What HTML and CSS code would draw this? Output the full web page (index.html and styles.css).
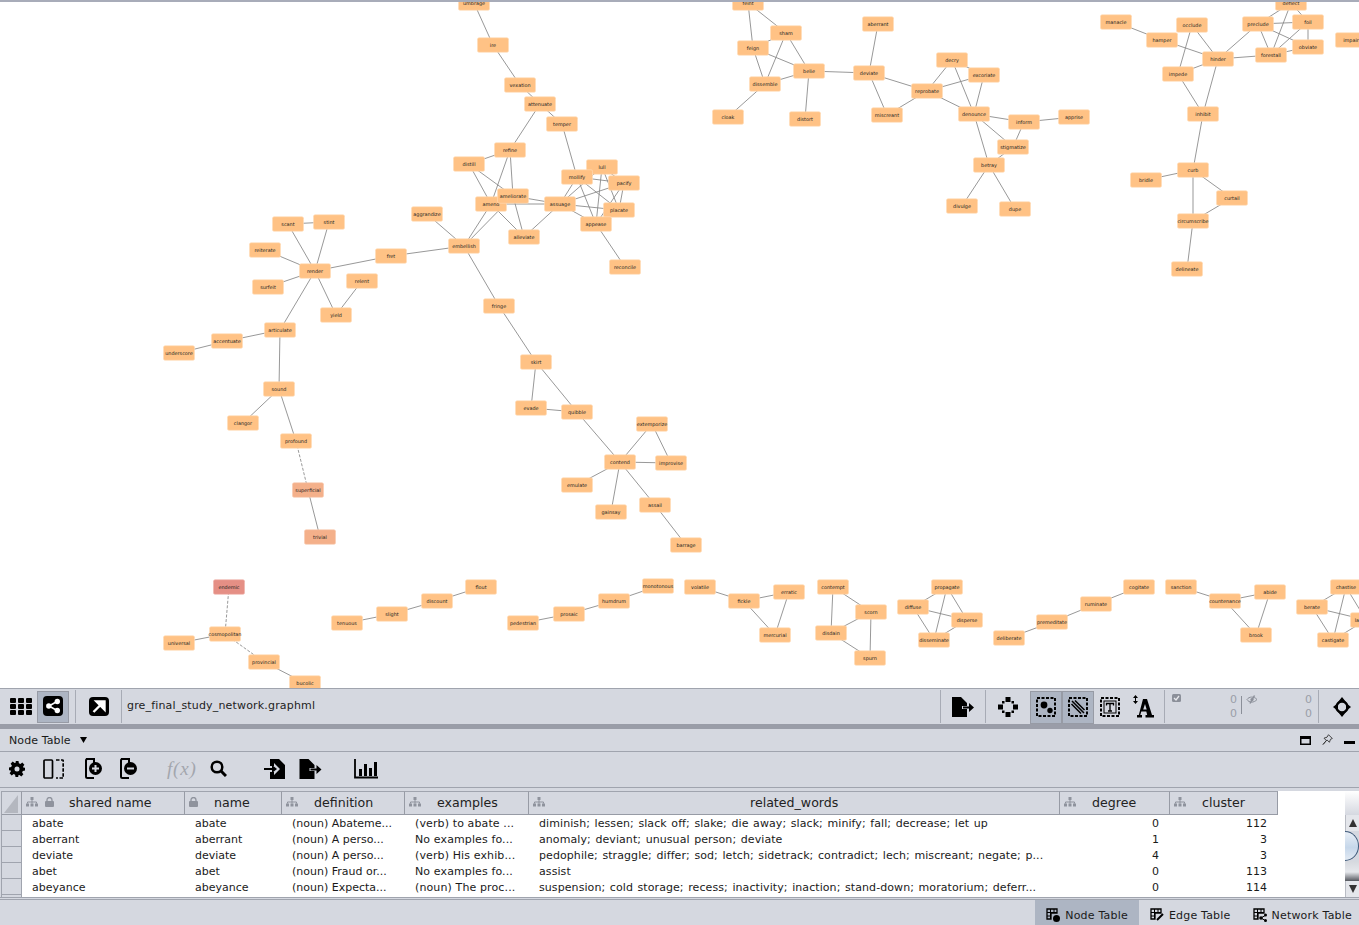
FILE: index.html
```html
<!DOCTYPE html>
<html lang="en">
<head>
<meta charset="utf-8">
<title>gre_final_study_network.graphml</title>
<link rel="stylesheet" href="styles.css">
</head>
<body>
<main class="canvas"><svg id="graph" class="graph" viewBox="0 2 1359 686" width="1359" height="686"></svg></main>

<section class="net-bar">
  <div class="group">
    <span class="tool t-grid"><svg width="22" height="17" viewBox="0 0 22 17"><g fill="#000"><rect width="6" height="5" rx="1"/><rect x="8" width="6" height="5" rx="1"/><rect x="16" width="6" height="5" rx="1"/><rect y="6" width="6" height="5" rx="1"/><rect x="8" y="6" width="6" height="5" rx="1"/><rect x="16" y="6" width="6" height="5" rx="1"/><rect y="12" width="6" height="5" rx="1"/><rect x="8" y="12" width="6" height="5" rx="1"/><rect x="16" y="12" width="6" height="5" rx="1"/></g></svg></span>
    <span class="tool t-share on"><svg width="20" height="20" viewBox="0 0 20 20"><rect width="20" height="20" rx="4" fill="#000"/><path d="M14 5.500 6 10l8 4.500" stroke="#fff" stroke-width="1.600" fill="none"/><circle cx="14.300" cy="5.500" r="2.700" fill="#fff"/><circle cx="5.800" cy="10" r="2.700" fill="#fff"/><circle cx="14.300" cy="14.500" r="2.700" fill="#fff"/></svg></span>
    <span class="sep s1"></span>
    <span class="tool t-open"><svg width="20" height="19" viewBox="0 0 20 19"><rect width="20" height="19" rx="4" fill="#000"/><path d="M4.500 15 13 6.500M7.500 4.500H15.500V12.500Z" stroke="#fff" stroke-width="2.400" fill="#fff"/></svg></span>
    <span class="sep s2"></span>
    <span class="file-name">gre_final_study_network.graphml</span>
  </div>
  <div class="group group-right">
    <span class="sep"></span>
    <span class="tool t-export"><svg width="22" height="20" viewBox="0 0 22 20"><path d="M0 0h9l6 6v3H10v3h5v8H0z" fill="#000"/><path d="M11 9.500h6V6l5 4.500-5 4.500v-3.500h-6z" fill="#000"/></svg></span>
    <span class="sep s3"></span>
    <span class="tool t-nb"><svg width="20" height="20" viewBox="0 0 20 20" fill="#000"><rect x="7.500" y="0" width="5" height="5"/><rect x="0" y="7.500" width="5" height="5"/><rect x="15" y="7.500" width="5" height="5"/><rect x="7.500" y="15" width="5" height="5"/><rect x="4" y="4" width="2.500" height="2.500"/><rect x="13.500" y="4" width="2.500" height="2.500"/><rect x="4" y="13.500" width="2.500" height="2.500"/><rect x="13.500" y="13.500" width="2.500" height="2.500"/></svg></span>
    <span class="toggle on first"><svg width="20" height="20" viewBox="0 0 20 20"><rect x="1" y="1" width="18" height="18" fill="none" stroke="#000" stroke-width="2" stroke-dasharray="3 1.500"/><circle cx="8" cy="8" r="3.400"/><circle cx="14" cy="13.500" r="2.700"/></svg></span>
    <span class="toggle on"><svg width="20" height="20" viewBox="0 0 20 20"><rect x="1" y="1" width="18" height="18" fill="none" stroke="#000" stroke-width="2" stroke-dasharray="3 1.500"/><path d="M4 4l12 12M7 3.500l9.500 9.500M3.500 7l9.500 9.500" stroke="#000" stroke-width="1.500"/></svg></span>
    <span class="toggle"><svg width="20" height="20" viewBox="0 0 20 20"><rect x="1" y="1" width="18" height="18" fill="none" stroke="#000" stroke-width="2" stroke-dasharray="3 1.500"/><rect x="4" y="4" width="12" height="12" fill="none" stroke="#000"/><path d="M6.500 8.500v-2h7v2M10 6.500v7.500M8 14h4" fill="none" stroke="#000" stroke-width="1.300"/></svg></span>
    <span class="t-label"><svg width="22" height="23" viewBox="0 0 22 23"><path d="M3.500 0 1 3h5zM3.500 9 1 6h5zM3 3h1v3H3z"/><path fill-rule="evenodd" d="M11 4h4l5 16h2v2.500h-8.500V20h1.700l-.9-3.500h-5l-1 3.500h1.700v2.500H5V20h1.800zM13 9l-1.800 5.500h3.500z"/></svg></span>
    <span class="sep s4"></span>
    <div class="counts">
      <svg class="ic-check" width="9" height="8" viewBox="0 0 9 8"><rect width="9" height="8" rx="1.500" fill="#8b8f99"/><path d="M2 4l2 2 3-4" stroke="#e8e9ed" stroke-width="1.300" fill="none"/></svg>
      <span class="nums n1"><span>0</span><span>0</span></span>
      <span class="minisep"></span>
      <svg class="ic-hide" width="12" height="9" viewBox="0 0 12 9"><path d="M1 4.500C3 1.500 8 1 11 4.500 8 8 3 8 1 4.500z" fill="none" stroke="#8b8f99"/><path d="M4 8.500 8.500 0.500" stroke="#8b8f99" stroke-width="1.500"/><circle cx="6" cy="4.500" r="1.600" fill="#8b8f99"/></svg>
      <span class="nums n2"><span>0</span><span>0</span></span>
    </div>
    <span class="sep s5"></span>
    <span class="t-fit"><svg width="18" height="20" viewBox="0 0 18 20"><path d="M9 0l4 5H5zM9 20l-4-5h8zM0 10l5-4v8zM18 10l-5 4V6z"/><circle cx="9" cy="10" r="5.500" fill="none" stroke="#000" stroke-width="2.400"/></svg></span>
  </div>
</section>

<div class="splitter"></div>

<header class="panel-head">
  <span class="panel-title">Node Table</span>
  <svg class="caret" width="7" height="6" viewBox="0 0 7 6"><path d="M0 0h7L3.500 6z"/></svg>
  <span class="panel-actions">
    <svg width="11" height="9" viewBox="0 0 11 9"><rect x=".75" y=".75" width="9.500" height="7.500" fill="none" stroke="#000" stroke-width="1.500"/><rect width="11" height="3"/></svg>
    <svg width="11" height="12" viewBox="0 0 11 12"><path d="M6.500.7l3.800 3.800-1.800.8-1.100 3-2.400-2.400L1 10.500l3.300-4L2 4.200l3-1z" fill="none" stroke="#333" stroke-width=".9"/></svg>
    <svg class="min" width="11" height="3" viewBox="0 0 11 3"><rect width="11" height="3"/></svg>
  </span>
</header>

<section class="table-tools">
  <svg class="i-gear" width="16" height="16" viewBox="0 0 16 16"><path fill-rule="evenodd" d="M6.500 0h3l.4 2.200 1.500.7L13.300 1.600l2.100 2.100-1.300 1.900.7 1.500L16 6.500v3l-2.200.4-.7 1.500 1.300 1.900-2.100 2.100-1.900-1.300-1.500.7L9.500 16h-3l-.4-2.200-1.500-.7-1.900 1.300L.6 12.300l1.300-1.900-.7-1.500L0 9.500v-3l2.200-.4.7-1.500L1.600 2.700 3.700.6l1.900 1.300 1.500-.7zM8 5.500a2.500 2.500 0 1 0 0 5 2.500 2.500 0 0 0 0-5z"/></svg>
  <svg class="i-cols" width="21" height="20" viewBox="0 0 21 20"><rect x="1" y="1" width="8.500" height="18" rx="1" fill="none" stroke="#000" stroke-width="1.700"/><path d="M13 1h6.500a.7.7 0 0 1 .7.700V19h-7.200" fill="none" stroke="#000" stroke-width="1.700" stroke-dasharray="3.500 1.500"/></svg>
  <svg class="i-add" width="17" height="21" viewBox="0 0 17 21"><path d="M9 1H2.500A1.500 1.500 0 0 0 1 2.500v16A1.500 1.500 0 0 0 2.500 20H9" fill="none" stroke="#000" stroke-width="2"/><path d="M1 1h8v4" fill="none" stroke="#000" stroke-width="2"/><circle cx="10.500" cy="10.500" r="6.500"/><path d="M10.500 7v7M7 10.500h7" stroke="#d5d8e0" stroke-width="2"/></svg>
  <svg class="i-del" width="17" height="21" viewBox="0 0 17 21"><path d="M9 1H2.500A1.500 1.500 0 0 0 1 2.500v16A1.500 1.500 0 0 0 2.500 20H9" fill="none" stroke="#000" stroke-width="2"/><path d="M1 1h8v4" fill="none" stroke="#000" stroke-width="2"/><circle cx="10.500" cy="10.500" r="6.500"/><path d="M7 10.500h7" stroke="#d5d8e0" stroke-width="2"/></svg>
  <span class="fx">f(x)</span>
  <svg class="i-search" width="17" height="17" viewBox="0 0 17 17"><circle cx="7" cy="7" r="5.300" fill="none" stroke="#000" stroke-width="2.500"/><path d="M11 11l5 5" stroke="#000" stroke-width="3"/></svg>
  <svg class="i-import" width="21" height="20" viewBox="0 0 21 20"><path d="M6 0h9l6 6v14H6v-7h4v3l6-6-6-6v3H6z"/><path d="M0 9h8V6l5 4-5 4v-3H0z"/></svg>
  <svg class="i-export" width="23" height="20" viewBox="0 0 22 20"><path d="M0 0h9l6 6v3H10v3h5v8H0z"/><path d="M11 9.500h6V6l5 4.500-5 4.500v-3.500h-6z"/></svg>
  <svg class="i-chart" width="24" height="20" viewBox="0 0 24 20"><path d="M1 0v18.500h23" fill="none" stroke="#000" stroke-width="1.800"/><rect x="5" y="10" width="3" height="7"/><rect x="10" y="5" width="3" height="12"/><rect x="15" y="9" width="3" height="8"/><rect x="20" y="3" width="3" height="14"/></svg>
</section>

<section class="table-wrap">
  <div class="table">
    <div class="row head">
      <div class="th corner"><svg width="14" height="18" viewBox="0 0 14 18"><path d="M14 0v18H0z" fill="#b4b7bf"/></svg></div>
      <div class="th c-shared"><svg class="ic-tree" width="12" height="10" viewBox="0 0 12 10"><use href="#tree"/></svg><svg class="ic-lock" width="9" height="10" viewBox="0 0 9 10"><use href="#lock"/></svg><span>shared name</span></div>
      <div class="th c-name"><svg class="ic-lock solo" width="9" height="10" viewBox="0 0 9 10"><use href="#lock"/></svg><span>name</span></div>
      <div class="th c-def"><svg class="ic-tree" width="12" height="10" viewBox="0 0 12 10"><use href="#tree"/></svg><span>definition</span></div>
      <div class="th c-ex"><svg class="ic-tree" width="12" height="10" viewBox="0 0 12 10"><use href="#tree"/></svg><span>examples</span></div>
      <div class="th c-rel"><svg class="ic-tree" width="12" height="10" viewBox="0 0 12 10"><use href="#tree"/></svg><span>related_words</span></div>
      <div class="th c-deg"><svg class="ic-tree" width="12" height="10" viewBox="0 0 12 10"><use href="#tree"/></svg><span>degree</span></div>
      <div class="th c-clu"><svg class="ic-tree" width="12" height="10" viewBox="0 0 12 10"><use href="#tree"/></svg><span>cluster</span></div>
    </div>
    <div class="rows">
      <div class="row"><div class="rh"></div><div class="td">abate</div><div class="td">abate</div><div class="td">(noun) Abateme...</div><div class="td ex">(verb) to abate ...</div><div class="td words">diminish; lessen; slack off; slake; die away; slack; minify; fall; decrease; let up</div><div class="td num">0</div><div class="td num">112</div></div>
      <div class="row"><div class="rh"></div><div class="td">aberrant</div><div class="td">aberrant</div><div class="td">(noun) A perso...</div><div class="td ex">No examples fo...</div><div class="td words">anomaly; deviant; unusual person; deviate</div><div class="td num">1</div><div class="td num">3</div></div>
      <div class="row"><div class="rh"></div><div class="td">deviate</div><div class="td">deviate</div><div class="td">(noun) A perso...</div><div class="td ex">(verb) His exhib...</div><div class="td words">pedophile; straggle; differ; sod; letch; sidetrack; contradict; lech; miscreant; negate; p...</div><div class="td num">4</div><div class="td num">3</div></div>
      <div class="row"><div class="rh"></div><div class="td">abet</div><div class="td">abet</div><div class="td">(noun) Fraud or...</div><div class="td ex">No examples fo...</div><div class="td words">assist</div><div class="td num">0</div><div class="td num">113</div></div>
      <div class="row"><div class="rh"></div><div class="td">abeyance</div><div class="td">abeyance</div><div class="td">(noun) Expecta...</div><div class="td ex">(noun) The proc...</div><div class="td words">suspension; cold storage; recess; inactivity; inaction; stand-down; moratorium; deferr...</div><div class="td num">0</div><div class="td num">114</div></div>
      <div class="rh tail"></div>
    </div>
  </div>
  <div class="scrollbar">
    <div class="sb-corner"></div>
    <div class="sb-btn"><svg width="8" height="8" viewBox="0 0 8 8"><path d="M4 0l4 8H0z" fill="#333"/></svg></div>
    <div class="sb-thumb"></div>
    <div class="sb-track"></div>
    <div class="sb-btn"><svg width="8" height="8" viewBox="0 0 8 8"><path d="M4 8L0 0h8z" fill="#333"/></svg></div>
  </div>
</section>

<footer class="status">
  <div class="tab on"><svg width="14" height="14" viewBox="0 0 14 14"><use href="#tbl"/><circle cx="10.500" cy="10.500" r="3.500"/></svg><span>Node Table</span></div>
  <div class="tab"><svg width="14" height="14" viewBox="0 0 14 14"><use href="#tbl"/><path d="M7 12l6-6" stroke="#000" stroke-width="2"/></svg><span>Edge Table</span></div>
  <div class="tab last"><svg width="14" height="14" viewBox="0 0 14 14"><use href="#tbl"/><path d="M8 10l5-3M8 10l5 3" stroke="#000"/><circle cx="8" cy="10" r="1.800"/><circle cx="12.500" cy="7" r="1.500"/><circle cx="12.500" cy="12.500" r="1.500"/></svg><span>Network Table</span></div>
</footer>

<svg class="defs" width="0" height="0" aria-hidden="true">
  <defs>
    <g id="tree" fill="#8f939d"><rect x="4.500" y="0" width="3" height="3"/><rect x="0" y="6.500" width="3" height="3"/><rect x="4.500" y="6.500" width="3" height="3"/><rect x="9" y="6.500" width="3" height="3"/><path d="M6 3v3.500M1.500 6.500V5h9v1.500" fill="none" stroke="#8f939d"/></g>
    <g id="lock"><rect x="0" y="4" width="9" height="6" rx="1" fill="#8f939d"/><path d="M2 4.500V3a2.500 2.500 0 0 1 5 0v1.500" fill="none" stroke="#8f939d" stroke-width="1.300"/></g>
    <g id="tbl"><path d="M1 1h10v4H5v6H1z" fill="none" stroke="#000" stroke-width="1.300"/><path d="M1 4.500h10M1 8h4M4.500 1v10M8 1v4" stroke="#000" stroke-width="1"/></g>
  </defs>
</svg>
<script src="app.js"></script>
</body>
</html>
```
FILE: styles.css
```css
* { box-sizing: border-box; }
html, body { margin: 0; padding: 0; }
body {
  width: 1359px;
  height: 925px;
  overflow: hidden;
  display: flex;
  flex-direction: column;
  background: #d5d8e0;
  color: #1a1a1a;
  font: 11px "DejaVu Sans", sans-serif;
}
.canvas { height: 688px; flex: none; background: #fff; border-top: 2px solid #a8acb9; overflow: hidden; }
.graph { display: block; }
.edge { stroke: #858585; stroke-width: .85; fill: none; }
.edge.dash { stroke-dasharray: 3 1.600; }
.node rect { fill: #ffc285; stroke: #ffdcb8; stroke-width: .6; }
.node.warm rect { fill: #f4b08a; stroke: #f8c9ae; }
.node.hot rect { fill: #e58f85; stroke: #efb3ab; }
.node text {
  font: 4.900px "DejaVu Sans", sans-serif;
  fill: #222;
  text-anchor: middle;
  text-rendering: geometricPrecision;
}

.net-bar {
  height: 36px; flex: none;
  display: flex; justify-content: space-between;
  border-top: 1px solid #a0a4ae;
}
.group { display: flex; align-items: center; height: 35px; }
.tool { display: flex; align-items: center; justify-content: center; }
.t-grid { margin-left: 10px; }
.t-share { align-self: flex-start; margin: 2px 0 0 5px; width: 32px; height: 32px; padding-bottom: 2px; background: #adb5c3; border: 1px solid #979ba5; }
.sep { width: 1px; height: 33px; background: #a7abb5; flex: none; }
.sep.s1 { margin-left: 6px; }
.t-open { margin-left: 13px; }
.sep.s2 { margin-left: 12px; }
.file-name { margin: 0 0 2px 5px; font-size: 11px; letter-spacing: .17px; color: #222; }
.t-export { margin-left: 11px; }
.sep.s3 { margin-left: 11px; }
.t-nb { margin-left: 12px; }
.toggle { width: 32px; height: 33px; margin-top: 1px; display: flex; align-items: center; justify-content: center; }
.toggle.first { margin-left: 12px; }
.toggle.on { background: #adb5c3; border: 1px solid #979ba5; }
.t-label { margin-left: 6px; display: flex; }
.sep.s4 { margin-left: 10px; }
.counts { width: 153px; height: 33px; flex: none; display: flex; color: #9a9ea8; font-size: 11px; }
.ic-check { margin: 4px 0 0 7px; }
.nums { display: flex; flex-direction: column; text-align: right; line-height: 14px; padding-top: 3px; }
.nums.n1 { margin-left: 49px; width: 6px; }
.minisep { width: 1px; height: 18px; margin: 6px 0 0 5px; background: #8b8f99; }
.ic-hide { margin: 5px 0 0 4px; }
.nums.n2 { margin-left: 47px; width: 6px; }
.t-fit { margin: 0 8px 0 14px; display: flex; }

.splitter { height: 5px; flex: none; background: #9a9da8; }

.panel-head {
  height: 23px; flex: none;
  display: flex; align-items: center;
  padding-left: 9px;
  border-bottom: 1px solid #a0a4ae;
}
.panel-title { font-size: 11px; letter-spacing: .1px; }
.caret { margin-left: 9px; }
.panel-actions { margin-left: auto; display: flex; align-items: center; gap: 11px; padding-right: 4px; }
.panel-actions .min { margin-top: 5px; }

.table-tools {
  height: 36px; flex: none;
  display: flex; align-items: center;
  padding-bottom: 2px;
  border-bottom: 1px solid #a0a4ae;
}
.i-gear { margin-left: 9px; }
.i-cols { margin-left: 18px; }
.i-add { margin-left: 21px; }
.i-del { margin-left: 18px; }
.fx { margin-left: 30px; width: 29px; font: italic 19px "Liberation Serif", serif; color: #a3a6ad; white-space: nowrap; letter-spacing: .8px; }
.i-search { margin-left: 14px; }
.i-import { margin-left: 37px; }
.i-export { margin-left: 14px; }
.i-chart { margin-left: 32px; }

.table-wrap {
  height: 107px; flex: none;
  margin-top: 3px;
  display: flex;
  border-bottom: 1px solid #a0a4ae;
  padding-left: 1px;
}
.table { width: 1344px; background: #fff; display: flex; flex-direction: column; border-left: 1px solid #a0a4ae; }
.row { display: grid; grid-template-columns: 20px 163px 97px 123px 124px 531px 110px 108px; }
.row.head { height: 24px; background: #fff; }
.th {
  display: flex; align-items: center;
  padding-bottom: 2px;
  background: #d5d8e0;
  border-top: 1px solid #a0a4ae;
  border-right: 1px solid #979ba5;
  border-bottom: 1px solid #979ba5;
  font-size: 12.600px; color: #222;
}
.th svg { flex: none; }
.th.corner { padding: 2px 0 0 2px; }
.ic-tree { margin-left: 4px; }
.ic-lock { margin-left: 7px; }
.ic-lock.solo { margin-left: 4px; }
.c-shared span { margin-left: 15px; }
.c-name span { margin-left: 16px; }
.c-def span { margin-left: 16px; }
.c-ex span { margin-left: 16px; }
.c-rel span { margin-left: 205px; }
.c-deg span { margin-left: 16px; }
.c-clu span { margin-left: 16px; }
.rows { flex: 1; }
.rh { background: #d5d8e0; border-right: 1px solid #a0a4ae; border-bottom: 1px solid #a0a4ae; height: 16px; }
.rh.tail { width: 20px; height: 2px; border-bottom: 0; }
.td { height: 16px; line-height: 16px; padding: 1px 10px 0; white-space: nowrap; overflow: hidden; }
.td.ex { letter-spacing: .12px; }
.td.words { letter-spacing: .08px; word-spacing: 1px; }
.td.num { text-align: right; padding-right: 11px; }

.scrollbar { width: 14px; flex: none; display: flex; flex-direction: column; }
.sb-corner { height: 24px; flex: none; background: linear-gradient(#fff, #d5d8e0); }
.sb-btn { height: 16px; flex: none; display: flex; align-items: center; justify-content: center; background: #e4e6eb; border-left: 1px solid #b9bcc4; }
.sb-thumb { height: 30px; flex: none; background: linear-gradient(#e8eef6, #c6d7ea 55%, #e2eaf3); border: 1px solid #3f5a7a; border-left: 0; border-radius: 0 14px 14px 0 / 0 15px 15px 0; }
.sb-track { flex: 1; background: linear-gradient(#d5d8de, #e6e8ec 55%, #55585f); }

.status { flex: 1; margin-top: 1px; border-top: 1px solid #a0a4ae; display: flex; justify-content: flex-end; }
.tab { display: flex; align-items: center; gap: 5px; padding: 5px 11px 0; letter-spacing: .2px; }
.tab.on { background: #adb5c3; }
.tab.last { padding-right: 7px; }
.defs { position: absolute; }
```
FILE: app.js
```js
var nodes = {
  umbrage:[474,3],ire:[493,45],vexation:[520,85],attenuate:[540,104],temper:[562,124],refine:[510,150],distill:[469,164],lull:[602,167],mollify:[577,177],pacify:[624,183],amend:[491,204],ameliorate:[513,196],assuage:[560,204],placate:[619,210],aggrandize:[427,214],appease:[596,224],alleviate:[524,237],embellish:[464,246],reconcile:[625,267],fret:[391,256],fringe:[499,306],
  scant:[288,224],stint:[329,222],reiterate:[265,250],render:[315,271],surfeit:[268,287],relent:[362,281],yield:[336,315],articulate:[280,330],accentuate:[227,341],underscore:[179,353],sound:[279,389],clangor:[243,423],profound:[296,441],superficial:[308,490],trivial:[320,537],
  skirt:[536,362],evade:[531,408],quibble:[577,412],extemporize:[652,424],contend:[620,462],improvise:[671,463],emulate:[577,485],gainsay:[611,512],assail:[655,505],barrage:[686,545],
  feint:[748,3],sham:[786,33],feign:[753,48],belie:[809,71],dissemble:[765,84],cloak:[728,117],distort:[805,119],aberrant:[878,24],deviate:[869,73],miscreant:[887,115],reprobate:[927,91],decry:[952,60],excoriate:[984,75],denounce:[974,114],inform:[1024,122],apprise:[1074,117],stigmatize:[1013,147],betray:[989,165],divulge:[962,206],dupe:[1015,209],
  deflect:[1291,3],manacle:[1116,22],hamper:[1162,40],occlude:[1192,25],preclude:[1258,24],foil:[1308,22],obviate:[1308,47],forestall:[1271,55],hinder:[1218,59],impede:[1178,74],impair:[1351,40],inhibit:[1203,114],curb:[1193,170],bridle:[1146,180],curtail:[1232,198],circumscribe:[1193,221],delineate:[1187,269],
  endemic:[229,587],cosmopolitan:[225,634],universal:[179,643],provincial:[264,662],bucolic:[305,683],
  tenuous:[347,623],slight:[392,614],discount:[437,601],flout:[481,587],pedestrian:[523,623],prosaic:[569,614],humdrum:[614,601],monotonous:[658,586],
  volatile:[700,587],fickle:[744,601],erratic:[789,592],mercurial:[775,635],contempt:[833,587],scorn:[871,612],disdain:[831,633],spurn:[870,658],propagate:[947,587],diffuse:[913,607],disperse:[967,620],disseminate:[934,640],
  deliberate:[1009,638],premeditate:[1052,622],ruminate:[1096,604],cogitate:[1139,587],sanction:[1181,587],countenance:[1225,601],abide:[1270,592],brook:[1256,635],chastise:[1346,587],berate:[1312,607],lambaste:[1366,620],castigate:[1333,640]
};
var edges = "umbrage-ire ire-vexation vexation-attenuate attenuate-temper attenuate-refine temper-mollify refine-distill refine-amend refine-ameliorate distill-amend distill-ameliorate amend-ameliorate amend-assuage ameliorate-assuage ameliorate-alleviate amend-alleviate assuage-alleviate embellish-amend embellish-ameliorate embellish-aggrandize embellish-fret embellish-fringe fringe-skirt fret-render assuage-mollify assuage-lull assuage-pacify assuage-placate assuage-appease mollify-lull mollify-pacify mollify-placate mollify-appease lull-pacify lull-placate lull-appease pacify-placate pacify-appease placate-appease appease-reconcile scant-stint scant-render stint-render reiterate-render surfeit-render render-yield relent-yield render-articulate articulate-accentuate accentuate-underscore articulate-sound sound-clangor sound-profound superficial-trivial skirt-evade skirt-quibble evade-quibble quibble-contend contend-extemporize extemporize-improvise contend-improvise contend-emulate contend-gainsay contend-assail assail-barrage feint-sham feint-feign feign-sham sham-dissemble sham-belie feign-belie feign-dissemble dissemble-belie dissemble-cloak belie-distort belie-deviate aberrant-deviate deviate-reprobate deviate-miscreant miscreant-reprobate reprobate-decry reprobate-excoriate reprobate-denounce decry-denounce decry-excoriate excoriate-denounce denounce-inform denounce-stigmatize denounce-betray inform-stigmatize inform-apprise stigmatize-betray betray-divulge betray-dupe manacle-hamper hamper-hinder occlude-impede occlude-hinder preclude-hinder preclude-forestall preclude-foil preclude-obviate preclude-deflect forestall-deflect forestall-foil forestall-obviate foil-obviate foil-deflect hinder-forestall hinder-impede hinder-inhibit impede-inhibit inhibit-curb curb-bridle curb-curtail curb-circumscribe curtail-circumscribe circumscribe-delineate universal-cosmopolitan provincial-bucolic tenuous-slight slight-discount discount-flout pedestrian-prosaic prosaic-humdrum humdrum-monotonous volatile-fickle fickle-erratic fickle-mercurial erratic-mercurial contempt-scorn contempt-disdain scorn-disdain scorn-spurn disdain-spurn propagate-diffuse propagate-disperse propagate-disseminate diffuse-disperse diffuse-disseminate disperse-disseminate deliberate-premeditate premeditate-ruminate ruminate-cogitate sanction-countenance countenance-abide countenance-brook abide-brook chastise-berate chastise-lambaste chastise-castigate berate-lambaste berate-castigate lambaste-castigate".split(" ");
var dashed = ["profound-superficial", "endemic-cosmopolitan", "cosmopolitan-provincial"];
var tone = { superficial: "warm", trivial: "warm", endemic: "hot" };
var NS = "http://www.w3.org/2000/svg";
var svg = document.getElementById("graph");

function el(tag, attrs, parent) {
  var e = document.createElementNS(NS, tag);
  for (var k in attrs) e.setAttribute(k, attrs[k]);
  parent.appendChild(e);
  return e;
}
function line(pair, cls) {
  var p = pair.split("-"), a = nodes[p[0]], b = nodes[p[1]];
  el("line", { x1: a[0], y1: a[1], x2: b[0], y2: b[1], "class": cls }, svg);
}
edges.forEach(function (e) { line(e, "edge"); });
dashed.forEach(function (e) { line(e, "edge dash"); });
Object.keys(nodes).forEach(function (name) {
  var c = nodes[name];
  var g = el("g", { "class": "node " + (tone[name] || "") }, svg);
  el("rect", { x: c[0] - 15.5, y: c[1] - 7.25, width: 31, height: 14.5, rx: 1.5 }, g);
  var t = el("text", { x: c[0], y: c[1] + 1.7 }, g);
  t.textContent = name;
});
```
